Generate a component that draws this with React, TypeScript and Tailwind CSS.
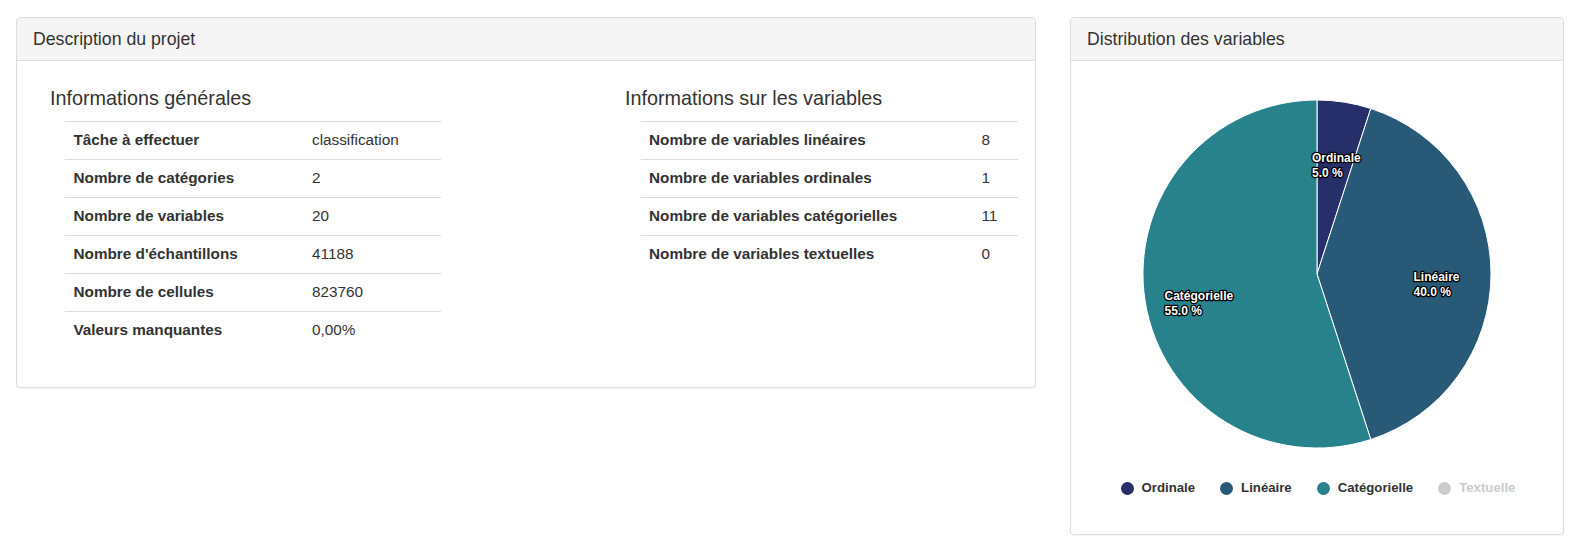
import React from "react";

const general: [string, string][] = [
  ["Tâche à effectuer", "classification"],
  ["Nombre de catégories", "2"],
  ["Nombre de variables", "20"],
  ["Nombre d'échantillons", "41188"],
  ["Nombre de cellules", "823760"],
  ["Valeurs manquantes", "0,00%"],
];

const vars: [string, string][] = [
  ["Nombre de variables linéaires", "8"],
  ["Nombre de variables ordinales", "1"],
  ["Nombre de variables catégorielles", "11"],
  ["Nombre de variables textuelles", "0"],
];

function InfoTable({ rows, firstCol, width }: { rows: [string, string][]; firstCol: string; width: string }) {
  return (
    <div className={`${width} mt-[11px]`}>
      {rows.map(([k, v]) => (
        <div key={k} className="flex items-center h-[38px] pt-[1px] border-t border-[#dddddd] text-[15.3px] text-[#333333]">
          <div className={`${firstCol} pl-[8.5px] font-bold`}>{k}</div>
          <div className="pl-[8px]">{v}</div>
        </div>
      ))}
    </div>
  );
}

function Label({ x, y, lines }: { x: number; y: number; lines: string[] }) {
  return (
    <text
      x={x}
      y={y}
      fontFamily="'Liberation Sans', Arial, sans-serif"
      fontSize={12}
      fontWeight="bold"
      fill="#ffffff"
      stroke="#000000"
      strokeWidth={2.5}
      strokeLinejoin="round"
      style={{ paintOrder: "stroke" }}
    >
      {lines.map((l, i) => (
        <tspan key={i} x={x} dy={i === 0 ? 0 : 15}>
          {l}
        </tspan>
      ))}
    </text>
  );
}

const legend = [
  { name: "Ordinale", color: "#262f69", text: "text-[#333333]" },
  { name: "Linéaire", color: "#285a78", text: "text-[#333333]" },
  { name: "Catégorielle", color: "#27828b", text: "text-[#333333]" },
  { name: "Textuelle", color: "#cccccc", text: "text-[#cccccc]" },
];

export default function App() {
  return (
    <div className="font-['Liberation_Sans',Arial,sans-serif] text-[#333333] bg-white w-[1576px] h-[544px] pt-[17px] pl-[16px] flex items-start gap-[34px]">
      {/* Left panel */}
      <div className="w-[1020px] border border-[#dddddd] rounded-[4px] shadow-[0_1px_1px_rgba(0,0,0,0.05)] bg-white">
        <div className="h-[43px] bg-[#f5f5f5] border-b border-[#dddddd] rounded-t-[3px] pl-[16px] pt-[12px] text-[17.7px] leading-[19.4px] text-[#333333]">
          Description du projet
        </div>
        <div className="flex pt-[27px] pb-[38px] pl-[33px]">
          <div className="w-[575px]">
            <div className="text-[19.8px] leading-[21.8px]">Informations générales</div>
            <div className="pl-[15px]">
              <InfoTable rows={general} firstCol="w-[239px]" width="w-[376px]" />
            </div>
          </div>
          <div>
            <div className="text-[19.8px] leading-[21.8px]">Informations sur les variables</div>
            <div className="pl-[15.5px]">
              <InfoTable rows={vars} firstCol="w-[333px]" width="w-[377px]" />
            </div>
          </div>
        </div>
      </div>

      {/* Right panel */}
      <div className="w-[494px] border border-[#dddddd] rounded-[4px] shadow-[0_1px_1px_rgba(0,0,0,0.05)] bg-white">
        <div className="h-[43px] bg-[#f5f5f5] border-b border-[#dddddd] rounded-t-[3px] pl-[16px] pt-[12px] text-[17.7px] leading-[19.4px] text-[#333333]">
          Distribution des variables
        </div>
        <div className="flex flex-col items-center pt-[33px] pb-[38px]">
          <svg width={360} height={360} viewBox="0 0 360 360">
            <path d="M180,180 L180,6 A174,174 0 0 1 233.77,14.52 Z" fill="#262f69" stroke="#ffffff" strokeWidth={1} />
            <path d="M180,180 L233.77,14.52 A174,174 0 0 1 233.77,345.48 Z" fill="#285a78" stroke="#ffffff" strokeWidth={1} />
            <path d="M180,180 L233.77,345.48 A174,174 0 1 1 180,6 Z" fill="#27828b" stroke="#ffffff" strokeWidth={1} />
            <Label x={175} y={68} lines={["Ordinale", "5.0 %"]} />
            <Label x={276.5} y={187} lines={["Linéaire", "40.0 %"]} />
            <Label x={27.5} y={205.5} lines={["Catégorielle", "55.0 %"]} />
          </svg>
          <div className="mt-[26px] h-[16px] pl-[2px] flex items-center gap-[25px] text-[13.2px] font-bold">
            {legend.map((l) => (
              <div key={l.name} className="flex items-center gap-[8px]">
                <span className="w-[13px] h-[13px] rounded-full" style={{ backgroundColor: l.color }} />
                <span className={l.text}>{l.name}</span>
              </div>
            ))}
          </div>
        </div>
      </div>
    </div>
  );
}
